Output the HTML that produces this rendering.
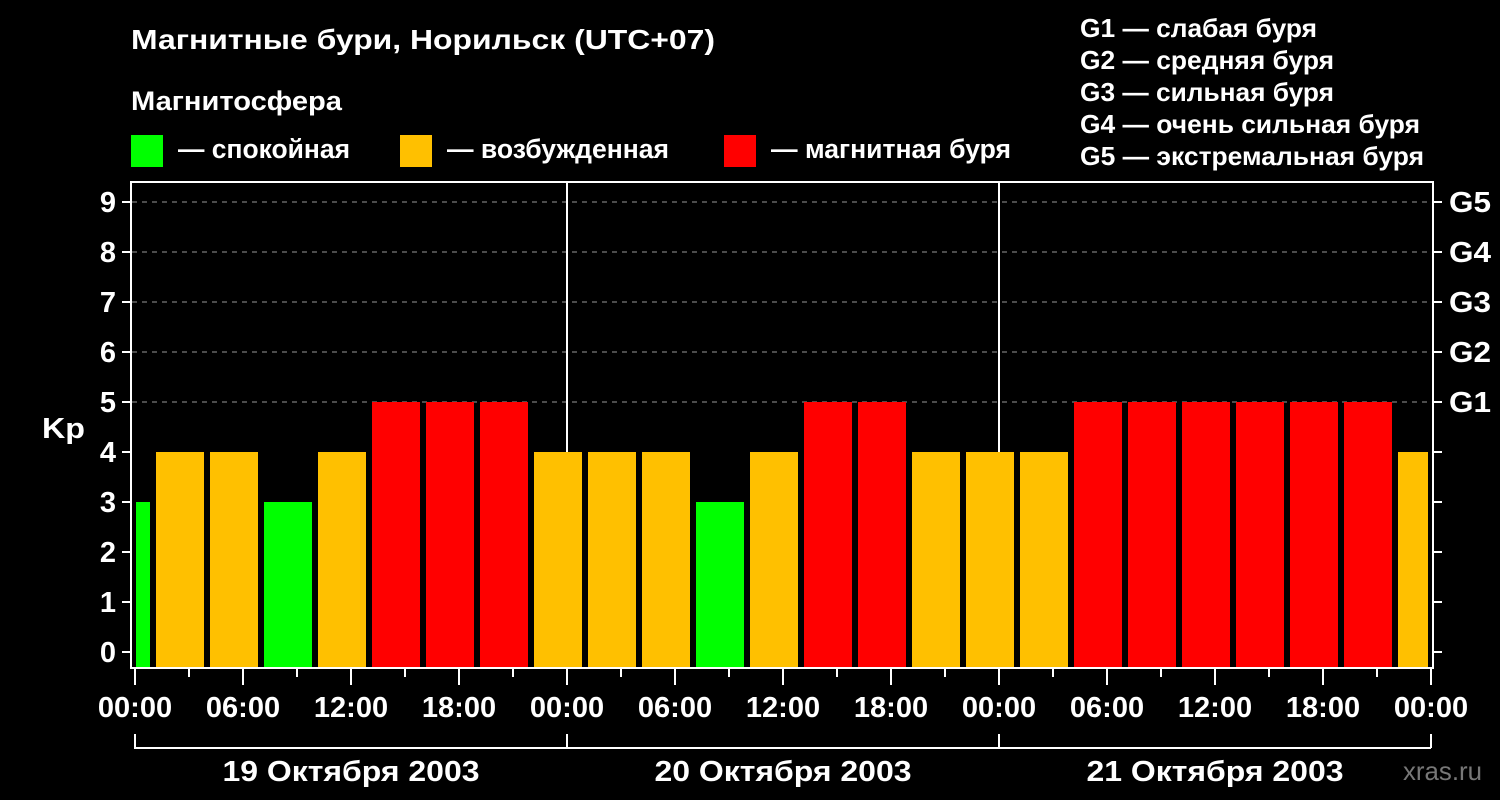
<!DOCTYPE html>
<html><head><meta charset="utf-8"><style>html,body{margin:0;padding:0;background:#000;}svg{display:block}</style></head>
<body>
<svg width="1500" height="800" xmlns="http://www.w3.org/2000/svg" font-family="Liberation Sans, sans-serif" font-weight="bold" fill="#fff">
<rect width="1500" height="800" fill="#000"/>
<text x="131" y="49" font-size="28" textLength="584" lengthAdjust="spacingAndGlyphs">Магнитные бури, Норильск (UTC+07)</text>
<text x="131" y="110" font-size="27" textLength="211" lengthAdjust="spacingAndGlyphs">Магнитосфера</text>
<rect x="131" y="135" width="32" height="32" fill="#00ff00"/>
<text x="178" y="158" font-size="27" textLength="172" lengthAdjust="spacingAndGlyphs">— спокойная</text>
<rect x="400" y="135" width="32" height="32" fill="#ffc000"/>
<text x="447" y="158" font-size="27" textLength="222" lengthAdjust="spacingAndGlyphs">— возбужденная</text>
<rect x="724" y="135" width="32" height="32" fill="#ff0000"/>
<text x="771" y="158" font-size="27" textLength="240" lengthAdjust="spacingAndGlyphs">— магнитная буря</text>
<g font-size="26" lengthAdjust="spacingAndGlyphs">
<text x="1080" y="37" textLength="237" lengthAdjust="spacingAndGlyphs">G1 — слабая буря</text>
<text x="1080" y="69" textLength="254" lengthAdjust="spacingAndGlyphs">G2 — средняя буря</text>
<text x="1080" y="101" textLength="254" lengthAdjust="spacingAndGlyphs">G3 — сильная буря</text>
<text x="1080" y="133" textLength="340" lengthAdjust="spacingAndGlyphs">G4 — очень сильная буря</text>
<text x="1080" y="165" textLength="344" lengthAdjust="spacingAndGlyphs">G5 — экстремальная буря</text>
</g>
<g stroke="#999" stroke-width="1" stroke-dasharray="5,5">
<line x1="132" y1="202" x2="1432" y2="202"/><line x1="132" y1="252" x2="1432" y2="252"/>
<line x1="132" y1="302" x2="1432" y2="302"/><line x1="132" y1="352" x2="1432" y2="352"/>
<line x1="132" y1="402" x2="1432" y2="402"/>
</g>
<g stroke="#fff" stroke-width="2">
<line x1="567" y1="182" x2="567" y2="668"/><line x1="999" y1="182" x2="999" y2="668"/>
</g>
<g>
<rect x="136" y="502" width="14" height="165" fill="#00ff00"/>
<rect x="156" y="452" width="48" height="215" fill="#ffc000"/>
<rect x="210" y="452" width="48" height="215" fill="#ffc000"/>
<rect x="264" y="502" width="48" height="165" fill="#00ff00"/>
<rect x="318" y="452" width="48" height="215" fill="#ffc000"/>
<rect x="372" y="402" width="48" height="265" fill="#ff0000"/>
<rect x="426" y="402" width="48" height="265" fill="#ff0000"/>
<rect x="480" y="402" width="48" height="265" fill="#ff0000"/>
<rect x="534" y="452" width="48" height="215" fill="#ffc000"/>
<rect x="588" y="452" width="48" height="215" fill="#ffc000"/>
<rect x="642" y="452" width="48" height="215" fill="#ffc000"/>
<rect x="696" y="502" width="48" height="165" fill="#00ff00"/>
<rect x="750" y="452" width="48" height="215" fill="#ffc000"/>
<rect x="804" y="402" width="48" height="265" fill="#ff0000"/>
<rect x="858" y="402" width="48" height="265" fill="#ff0000"/>
<rect x="912" y="452" width="48" height="215" fill="#ffc000"/>
<rect x="966" y="452" width="48" height="215" fill="#ffc000"/>
<rect x="1020" y="452" width="48" height="215" fill="#ffc000"/>
<rect x="1074" y="402" width="48" height="265" fill="#ff0000"/>
<rect x="1128" y="402" width="48" height="265" fill="#ff0000"/>
<rect x="1182" y="402" width="48" height="265" fill="#ff0000"/>
<rect x="1236" y="402" width="48" height="265" fill="#ff0000"/>
<rect x="1290" y="402" width="48" height="265" fill="#ff0000"/>
<rect x="1344" y="402" width="48" height="265" fill="#ff0000"/>
<rect x="1398" y="452" width="30" height="215" fill="#ffc000"/>
</g>
<g stroke="#fff" stroke-width="2" fill="none">
<rect x="131" y="182" width="1302" height="486"/>
<path d="M122 202H131M122 252H131M122 302H131M122 352H131M122 402H131M122 452H131M122 502H131M122 552H131M122 602H131M122 652H131"/>
<path d="M1433 202H1442M1433 252H1442M1433 302H1442M1433 352H1442M1433 402H1442M1433 452H1442M1433 502H1442M1433 552H1442M1433 602H1442M1433 652H1442"/>
<path d="M135 668V685M243 668V685M351 668V685M459 668V685M567 668V685M675 668V685M783 668V685M891 668V685M999 668V685M1107 668V685M1215 668V685M1323 668V685M1431 668V685"/>
<path d="M189 668V677M297 668V677M405 668V677M513 668V677M621 668V677M729 668V677M837 668V677M945 668V677M1053 668V677M1161 668V677M1269 668V677M1377 668V677"/>
<path d="M135 734V748H1431M567 734V748M999 734V748M1431 734V748"/>
</g>
<g font-size="29" text-anchor="end">
<text x="116" y="212">9</text><text x="116" y="262">8</text><text x="116" y="312">7</text><text x="116" y="362">6</text><text x="116" y="412">5</text>
<text x="116" y="462">4</text><text x="116" y="512">3</text><text x="116" y="562">2</text><text x="116" y="612">1</text><text x="116" y="662">0</text>
</g>
<text x="42" y="438" font-size="29" textLength="43" lengthAdjust="spacingAndGlyphs">Kp</text>
<g font-size="29">
<text x="1449" y="212" textLength="42" lengthAdjust="spacingAndGlyphs">G5</text><text x="1449" y="262" textLength="42" lengthAdjust="spacingAndGlyphs">G4</text><text x="1449" y="312" textLength="42" lengthAdjust="spacingAndGlyphs">G3</text><text x="1449" y="362" textLength="42" lengthAdjust="spacingAndGlyphs">G2</text><text x="1449" y="412" textLength="42" lengthAdjust="spacingAndGlyphs">G1</text>
</g>
<g font-size="29" text-anchor="middle">
<text x="135" y="717">00:00</text><text x="243" y="717">06:00</text><text x="351" y="717">12:00</text><text x="459" y="717">18:00</text>
<text x="567" y="717">00:00</text><text x="675" y="717">06:00</text><text x="783" y="717">12:00</text><text x="891" y="717">18:00</text>
<text x="999" y="717">00:00</text><text x="1107" y="717">06:00</text><text x="1215" y="717">12:00</text><text x="1323" y="717">18:00</text>
<text x="1431" y="717">00:00</text>
<text x="351" y="781" textLength="257" lengthAdjust="spacingAndGlyphs">19 Октября 2003</text>
<text x="783" y="781" textLength="257" lengthAdjust="spacingAndGlyphs">20 Октября 2003</text>
<text x="1215" y="781" textLength="257" lengthAdjust="spacingAndGlyphs">21 Октября 2003</text>
</g>
<text x="1403" y="780" font-size="26" fill="#777" font-weight="normal" textLength="79" lengthAdjust="spacingAndGlyphs">xras.ru</text>
</svg>
</body></html>
